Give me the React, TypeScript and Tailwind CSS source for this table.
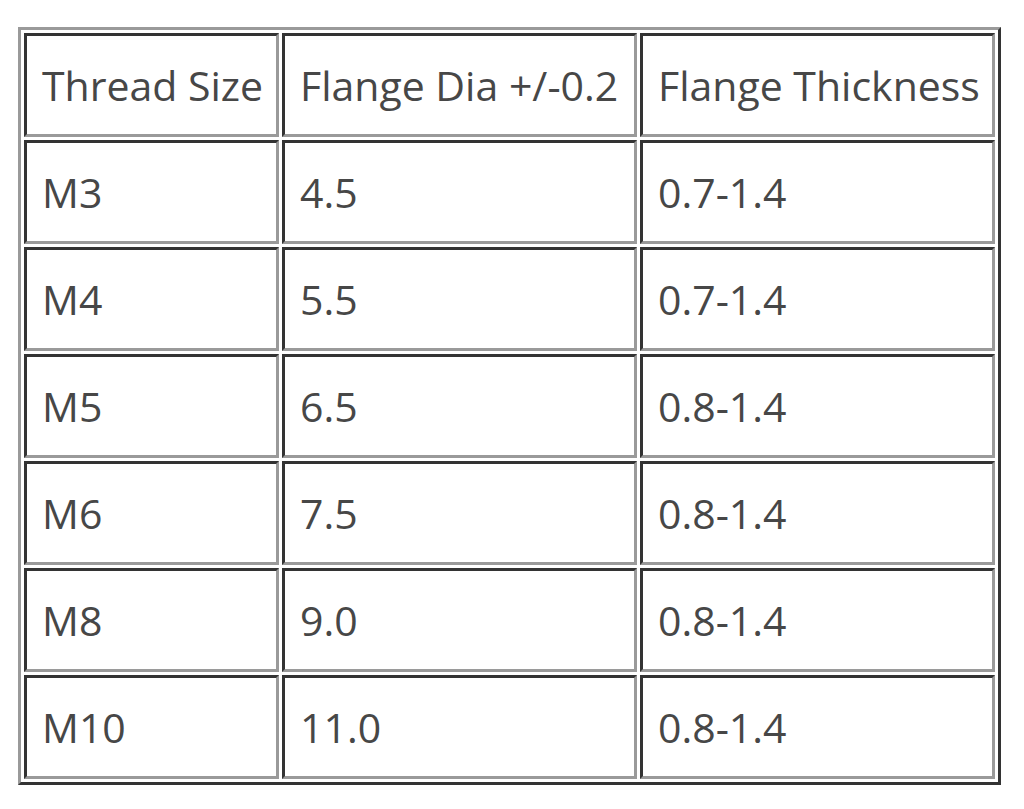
const rows = [
  ['M3', '4.5', '0.7-1.4'],
  ['M4', '5.5', '0.7-1.4'],
  ['M5', '6.5', '0.8-1.4'],
  ['M6', '7.5', '0.8-1.4'],
  ['M8', '9.0', '0.8-1.4'],
  ['M10', '11.0', '0.8-1.4'],
];

const cell =
  'h-[104px] pl-[15px] pr-[2px] text-left align-middle font-normal whitespace-nowrap border-[3px] border-t-[#333] border-l-[#333] border-b-[#9a9a9a] border-r-[#9a9a9a]';

export default function App() {
  return (
    <div className="min-h-screen bg-white pl-[18px] pt-[27px]">
      <table
        className="table-fixed border-separate border-spacing-[3px] border-[3px] border-t-[#9a9a9a] border-l-[#9a9a9a] border-b-[#333] border-r-[#333] text-[41px] leading-none text-[#474747] w-[983px]"
        style={{ fontFamily: '"Open Sans", "Noto Sans", sans-serif' }}
      >
        <thead>
          <tr>
            <th className={`${cell} w-[255px]`}>Thread Size</th>
            <th className={`${cell} w-[355px]`}>Flange Dia +/-0.2</th>
            <th className={`${cell} w-[355px]`}>Flange Thickness</th>
          </tr>
        </thead>
        <tbody>
          {rows.map((r) => (
            <tr key={r[0]}>
              {r.map((v, i) => (
                <td key={i} className={cell}>
                  {v}
                </td>
              ))}
            </tr>
          ))}
        </tbody>
      </table>
    </div>
  );
}
